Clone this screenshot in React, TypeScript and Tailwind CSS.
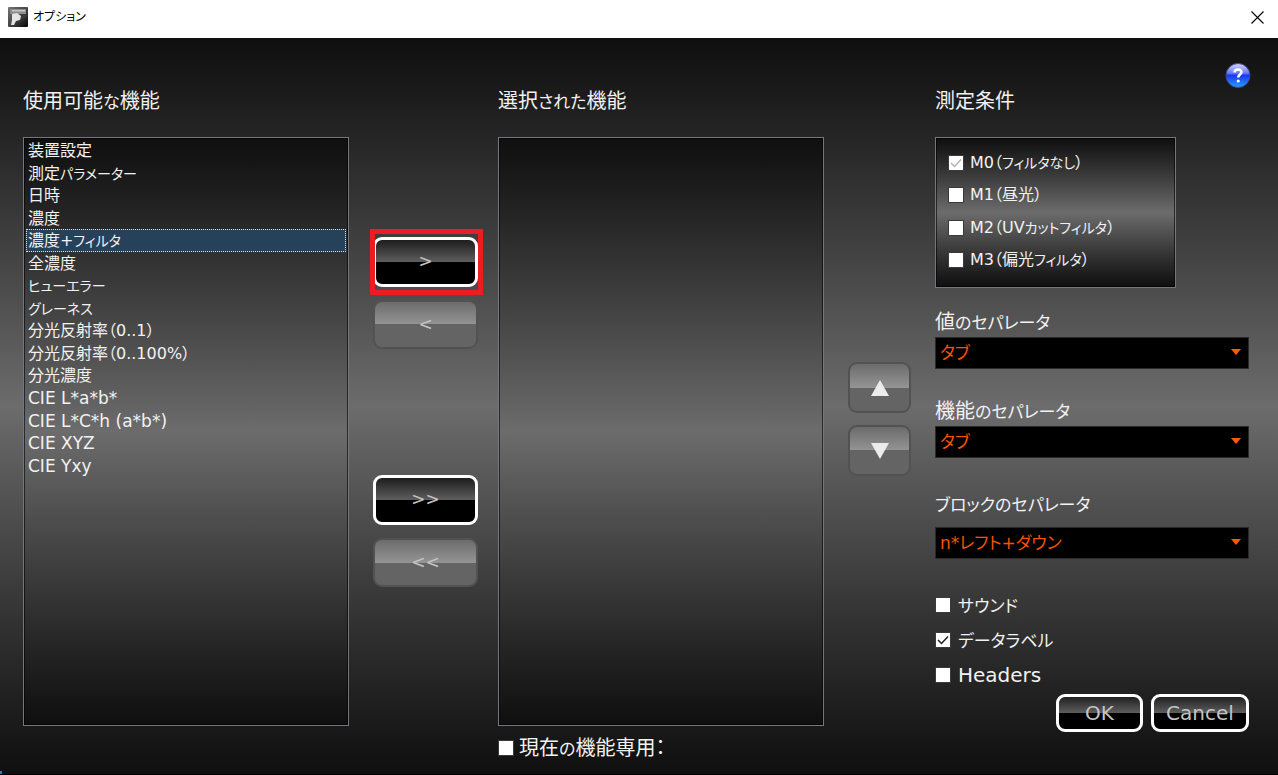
import { useState } from "react";
import type { ReactNode } from "react";

const available = [
  "装置設定",
  "測定パラメーター",
  "日時",
  "濃度",
  "濃度+フィルタ",
  "全濃度",
  "ヒューエラー",
  "グレーネス",
  "分光反射率（0..1）",
  "分光反射率（0..100%）",
  "分光濃度",
  "CIE L*a*b*",
  "CIE L*C*h (a*b*)",
  "CIE XYZ",
  "CIE Yxy",
];

const conditions = [
  { id: "m0", label: "M0（フィルタなし）", checked: true, disabled: true },
  { id: "m1", label: "M1（昼光）" },
  { id: "m2", label: "M2（UVカットフィルタ）" },
  { id: "m3", label: "M3（偏光フィルタ）" },
];

const panel = "border border-[#75767e] ring-1 ring-inset ring-black/60";
const metal = "bg-linear-to-b from-[#0f0f0f] via-[#6c6c6c] to-[#0f0f0f]";

// kana are set a little smaller than the kanji around them
const Kana = ({ text, small }: { text: string; small?: boolean }) => (
  <>
    {text.split(/([\u3040-\u30ff]+)/).map((part, index) =>
      index % 2 === 1 ? (
        <span key={index} className={`leading-none ${small ? "text-[14px]" : "text-[17px]"}`}>
          {part}
        </span>
      ) : (
        part
      )
    )}
  </>
);

type GlossButtonProps = {
  label: string;
  children: ReactNode;
  disabled?: boolean;
  className: string;
};

const GlossButton = ({ label, children, disabled, className }: GlossButtonProps) => (
  <button
    type="button"
    aria-label={label}
    disabled={disabled}
    className={`flex items-center justify-center rounded-[9px] bg-origin-border text-[#c4c4c4] ${
      disabled
        ? "border-2 border-[#525252] bg-[linear-gradient(#686868,#949494_50%,#646464_50%)]"
        : "border-[3px] border-white bg-[linear-gradient(#141414,#5e5e5e_50%,#000_50%)]"
    } ${className}`}
  >
    {children}
  </button>
);

type CheckProps = {
  id: string;
  label: string;
  checked?: boolean;
  disabled?: boolean;
  small?: boolean;
  className: string;
};

const Check = ({ id, label, checked = false, disabled, small, className }: CheckProps) => {
  const [on, setOn] = useState(checked);

  return (
    <div className={`flex items-center ${small ? "text-[16px]" : "text-[20px]"} ${className}`}>
      <span className="relative flex">
        <input
          id={id}
          type="checkbox"
          checked={on}
          disabled={disabled}
          onChange={() => setOn(!on)}
          className="h-4 w-4 appearance-none border border-[#3a3a3a] bg-white"
        />
        {on && (
          <svg
            viewBox="0 0 16 16"
            className={`pointer-events-none absolute inset-0 h-4 w-4 ${disabled ? "text-[#b4b4b4]" : "text-[#222]"}`}
          >
            <path d="M3 8l3.5 3.5L13 4.5" fill="none" stroke="currentColor" strokeWidth="1.5" />
          </svg>
        )}
      </span>
      <label htmlFor={id} className="whitespace-nowrap">
        <Kana text={label} small={small} />
      </label>
    </div>
  );
};

type SeparatorProps = {
  id: string;
  label: string;
  options: string[];
  className: string;
};

const Separator = ({ id, label, options, className }: SeparatorProps) => (
  <div className={`flex flex-col ${className}`}>
    <label htmlFor={id} className="text-[20px] leading-[30px]">
      <Kana text={label} />
    </label>
    <div className="relative">
      <select
        id={id}
        className="h-8 w-full appearance-none border border-[#2a2a2a] bg-black px-1 text-[17px] leading-[30px] text-[#f65200]"
      >
        {options.map((option) => (
          <option key={option}>{option}</option>
        ))}
      </select>
      <svg viewBox="0 0 10 6" className="pointer-events-none absolute top-3 right-2 h-[6px] w-[10px]">
        <path d="M0 0h10L5 6z" fill="#ff5a00" />
      </svg>
    </div>
  </div>
);

const TitleBar = () => (
  <header className="flex h-[38px] shrink-0 items-center bg-white pb-1 pl-2 text-black">
    <svg viewBox="0 0 20 20" className="h-5 w-5">
      <defs>
        <linearGradient id="app" x1="0" y1="0" x2="1" y2="1">
          <stop offset="0" stopColor="#777" />
          <stop offset="0.5" stopColor="#444" />
          <stop offset="1" stopColor="#050505" />
        </linearGradient>
      </defs>
      <rect width="20" height="20" rx="1" fill="url(#app)" />
      <path d="M2 2h16v5H2z" fill="#8c8c8c" />
      <path d="M4 3h13v1.500H4z" fill="#c4c4c4" />
      <path d="M4 7l5-1 4 3-1 4-4 1-2 4H3l1-5z" fill="#e4e4e4" />
      <path d="M13 8l5-1v3l-5 3z" fill="#3a3a3a" />
    </svg>
    <h1 className="ml-[5px] flex-1 text-[12px]">オプション</h1>
    <button type="button" aria-label="閉じる" className="mr-[14px] flex">
      <svg viewBox="0 0 13 13" className="h-[13px] w-[13px]">
        <path d="M.5.5l12 12M12.500.5l-12 12" stroke="#000" strokeWidth="1.1" />
      </svg>
    </button>
  </header>
);

const App = () => {
  const [selected, setSelected] = useState("濃度+フィルタ");

  return (
    <div className="flex min-h-screen flex-col font-['DejaVu_Sans','Noto_Sans_CJK_JP',sans-serif] text-[#f2f2f2] [font-feature-settings:'palt']">
      <TitleBar />

      <main className={`relative flex flex-1 border-b border-black pr-[29px] pl-[23px] ${metal}`}>
        <section className="flex min-w-0 flex-1 flex-col pt-12 pb-12">
          <h2 id="available" className="mb-[21px] text-[20px] leading-[30px]">
            <Kana text="使用可能な機能" />
          </h2>
          <ul role="listbox" aria-labelledby="available" className={`flex-1 p-px ${panel} ${metal}`}>
            {available.map((item) => (
              <li
                key={item}
                role="option"
                aria-selected={item === selected}
                onClick={() => setSelected(item)}
                className={`mx-px cursor-default border border-dotted px-px pt-px leading-[19px] odd:leading-5 ${
                  item.startsWith("CIE") ? "text-[17px]" : "text-[16px]"
                } ${item === selected ? "border-[#d8e4ec] bg-[#26415a]" : "border-transparent"}`}
              >
                <Kana text={item} small />
              </li>
            ))}
          </ul>
        </section>

        <div className="mr-5 ml-6 flex w-[105px] flex-col pt-[199px] text-[17px]">
          <div className="relative flex flex-col">
            <GlossButton label="追加" className="h-[50px]">&gt;</GlossButton>
            <span className="pointer-events-none absolute -inset-y-2 -right-[5px] -left-[3px] border-[5px] border-[#ed1c24]" />
          </div>
          <GlossButton label="削除" disabled className="mt-[13px] h-[49px]">&lt;</GlossButton>
          <GlossButton label="すべて追加" className="mt-[126px] h-[50px]">&gt;&gt;</GlossButton>
          <GlossButton label="すべて削除" disabled className="mt-[13px] h-[49px]">&lt;&lt;</GlossButton>
        </div>

        <section className="flex min-w-0 flex-1 flex-col pt-12">
          <h2 id="chosen" className="mb-[21px] text-[20px] leading-[30px]">
            <Kana text="選択された機能" />
          </h2>
          <ul role="listbox" aria-labelledby="chosen" className={`flex-1 ${panel} ${metal}`} />
          <Check id="only" label="現在の機能専用：" className="h-12 gap-[5px] pb-1" />
        </section>

        <div className="mx-6 flex w-[63px] flex-col gap-3 pt-[324px]">
          <GlossButton label="上へ" disabled className="h-[51px]">
            <svg viewBox="0 0 20 16" className="h-4 w-5">
              <path d="M10 0l9 16H1z" fill="#ececec" />
            </svg>
          </GlossButton>
          <GlossButton label="下へ" disabled className="h-[51px]">
            <svg viewBox="0 0 20 16" className="h-4 w-5">
              <path d="M1 0h18l-9 16z" fill="#ececec" />
            </svg>
          </GlossButton>
        </div>

        <section className="flex w-[314px] flex-col pt-6">
          <div className="flex justify-end">
            <button type="button" aria-label="ヘルプ" className="-mr-1 flex">
              <svg viewBox="0 0 28 28" className="h-7 w-7">
                <defs>
                  <linearGradient id="help" x1="0" y1="0" x2="0" y2="1">
                    <stop offset="0" stopColor="#d8d8fa" />
                    <stop offset="0.4" stopColor="#6a78f4" />
                    <stop offset="0.5" stopColor="#1838f4" />
                    <stop offset="1" stopColor="#28a0ff" />
                  </linearGradient>
                </defs>
                <circle cx="13" cy="13.500" r="12" fill="url(#help)" stroke="#3a4a90" />
                <path
                  d="M9.500 10.500c0-4 7-4 7-.5 0 2.500-3.300 2.500-3.300 5.500"
                  fill="none"
                  stroke="#fff"
                  strokeWidth="2.600"
                />
                <circle cx="13.200" cy="19" r="1.600" fill="#fff" />
              </svg>
            </button>
          </div>
          <h2 className="-mt-1 mb-[21px] text-[20px] leading-[30px]">測定条件</h2>

          <div className={`w-[241px] px-3 pt-2 pb-[11px] ${panel} ${metal}`}>
            {conditions.map((item) => (
              <Check key={item.id} {...item} small className="h-8 gap-[6px] odd:h-[33px]" />
            ))}
          </div>

          <Separator id="value" label="値のセパレータ" options={["タブ", "カンマ"]} className="mt-[19px]" />
          <Separator id="function" label="機能のセパレータ" options={["タブ", "カンマ"]} className="mt-[27px]" />
          <Separator
            id="block"
            label="ブロックのセパレータ"
            options={["n*レフト+ダウン", "タブ"]}
            className="mt-[31px] gap-2"
          />

          <div className="mt-7">
            <Check id="sound" label="サウンド" className="h-[35px] gap-[7px]" />
            <Check id="datalabel" label="データラベル" checked className="h-[35px] gap-[7px]" />
            <Check id="headers" label="Headers" className="h-[35px] gap-[7px]" />
          </div>

          <div className="mt-[2px] flex justify-end gap-2 text-[20px]">
            <GlossButton label="OK" className="h-[38px] w-[87px]">OK</GlossButton>
            <GlossButton label="Cancel" className="h-[38px] w-[98px]">Cancel</GlossButton>
          </div>
        </section>

        <span className="absolute bottom-0 left-0 h-[3px] w-[2px] bg-[#0a84e0]" />
      </main>
    </div>
  );
};

export default App;
